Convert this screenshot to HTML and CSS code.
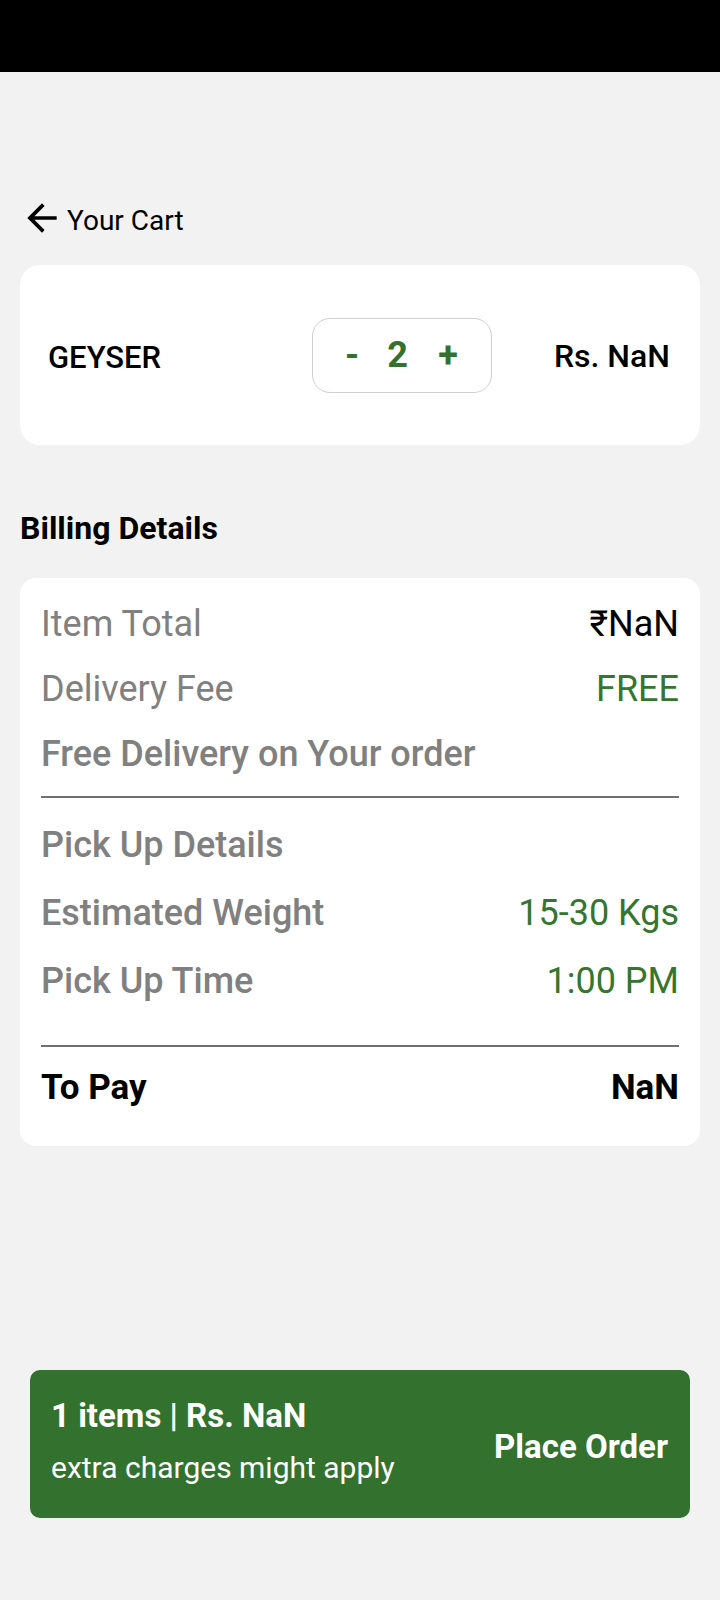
FILE: index.html
```html
<!DOCTYPE html>
<html>
<head>
<meta charset="utf-8">
<link rel="stylesheet" href="styles.css">
</head>
<body>
<div class="statusbar"></div>
<div class="header">
  <svg class="back" viewBox="0 0 24 24" width="44" height="44"><path d="M20 11H7.83l5.59-5.59L12 4l-8 8 8 8 1.41-1.41L7.83 13H20v-2z" fill="#000"/></svg>
  <span class="title">Your Cart</span>
</div>
<div class="item-card">
  <div class="item-name">GEYSER</div>
  <div class="stepper">
    <span class="step minus">-</span>
    <span class="step qty">2</span>
    <span class="step plus">+</span>
  </div>
  <div class="item-price">Rs. NaN</div>
</div>
<div class="section-title">Billing Details</div>
<div class="bill-card">
  <div class="row"><span class="label">Item Total</span><span class="value">₹NaN</span></div>
  <div class="row"><span class="label">Delivery Fee</span><span class="value green">FREE</span></div>
  <div class="row"><span class="label medium">Free Delivery on Your order</span></div>
  <div class="divider"></div>
  <div class="row tall first"><span class="label medium">Pick Up Details</span></div>
  <div class="row tall"><span class="label medium">Estimated Weight</span><span class="value green">15-30 Kgs</span></div>
  <div class="row tall"><span class="label medium">Pick Up Time</span><span class="value green">1:00 PM</span></div>
  <div class="divider second"></div>
  <div class="row total"><span>To Pay</span><span>NaN</span></div>
</div>
<div class="order-bar">
  <div class="order-info">
    <div class="order-count">1 items | Rs. NaN</div>
    <div class="order-note">extra charges might apply</div>
  </div>
  <div class="order-btn">Place Order</div>
</div>
</body>
</html>
```
FILE: styles.css
```css
* { box-sizing: border-box; }
body {
  margin: 0;
  background: #f2f2f2;
  font-family: Roboto, "Noto Sans", sans-serif;
  color: #000;
}
.statusbar { height: 72px; background: #000; }
.header {
  display: flex;
  align-items: center;
  height: 44px;
  margin-top: 124px;
  padding-left: 20px;
  gap: 3px;
}
.back { display: block; flex: none; }
.title { font-size: 28px; padding-top: 5px; }
.item-card {
  margin: 25px 20px 0;
  height: 180px;
  background: #fff;
  border-radius: 20px;
  display: flex;
  align-items: center;
  padding: 0 30px 0 28px;
}
.item-name { flex: 0 0 264px; font-size: 31px; font-weight: 500; padding-top: 4px; }
.stepper {
  flex: none;
  width: 180px;
  height: 75px;
  border: 1.5px solid #cfcfcf;
  border-radius: 18px;
  display: flex;
  align-items: center;
  padding-left: 19px;
  color: #33712d;
  font-weight: 700;
  font-size: 36px;
}
.step { text-align: center; }
.step.minus { width: 40px; }
.step.qty { width: 51px; }
.step.plus { width: 50px; }
.item-price { margin-left: auto; font-size: 32px; font-weight: 500; padding-top: 2px; }
.section-title {
  margin: 64px 20px 0;
  font-size: 32px;
  font-weight: 700;
}
.bill-card {
  margin: 31px 20px 0;
  background: #fff;
  border-radius: 16px;
  padding: 14px 21px 33px;
}
.row {
  display: flex;
  justify-content: space-between;
  font-size: 36px;
  line-height: 65px;
  height: 65px;
}
.row.tall { line-height: 68px; height: 68px; }
.row.first { margin-top: 13px; }
.label { color: #808080; }
.label.medium { font-weight: 500; }
.value { color: #000; }
.value.green { color: #36752f; }
.divider { height: 2px; background: #707070; margin-top: 9px; }
.divider.second { margin-top: 30px; }
.row.total {
  font-size: 35px;
  font-weight: 700;
  line-height: 50px;
  height: 50px;
  margin-top: 16px;
}
.order-bar {
  margin: 224px 30px 0;
  height: 148px;
  background: #32712e;
  border-radius: 10px;
  display: flex;
  align-items: center;
  justify-content: space-between;
  padding: 0 22px 0 21px;
  color: #fff;
}
.order-info { padding-bottom: 5px; }
.order-count { font-size: 33px; font-weight: 700; line-height: 52px; }
.order-note { font-size: 30px; line-height: 52px; }
.order-btn { font-size: 33px; font-weight: 700; padding-top: 4px; }
```
